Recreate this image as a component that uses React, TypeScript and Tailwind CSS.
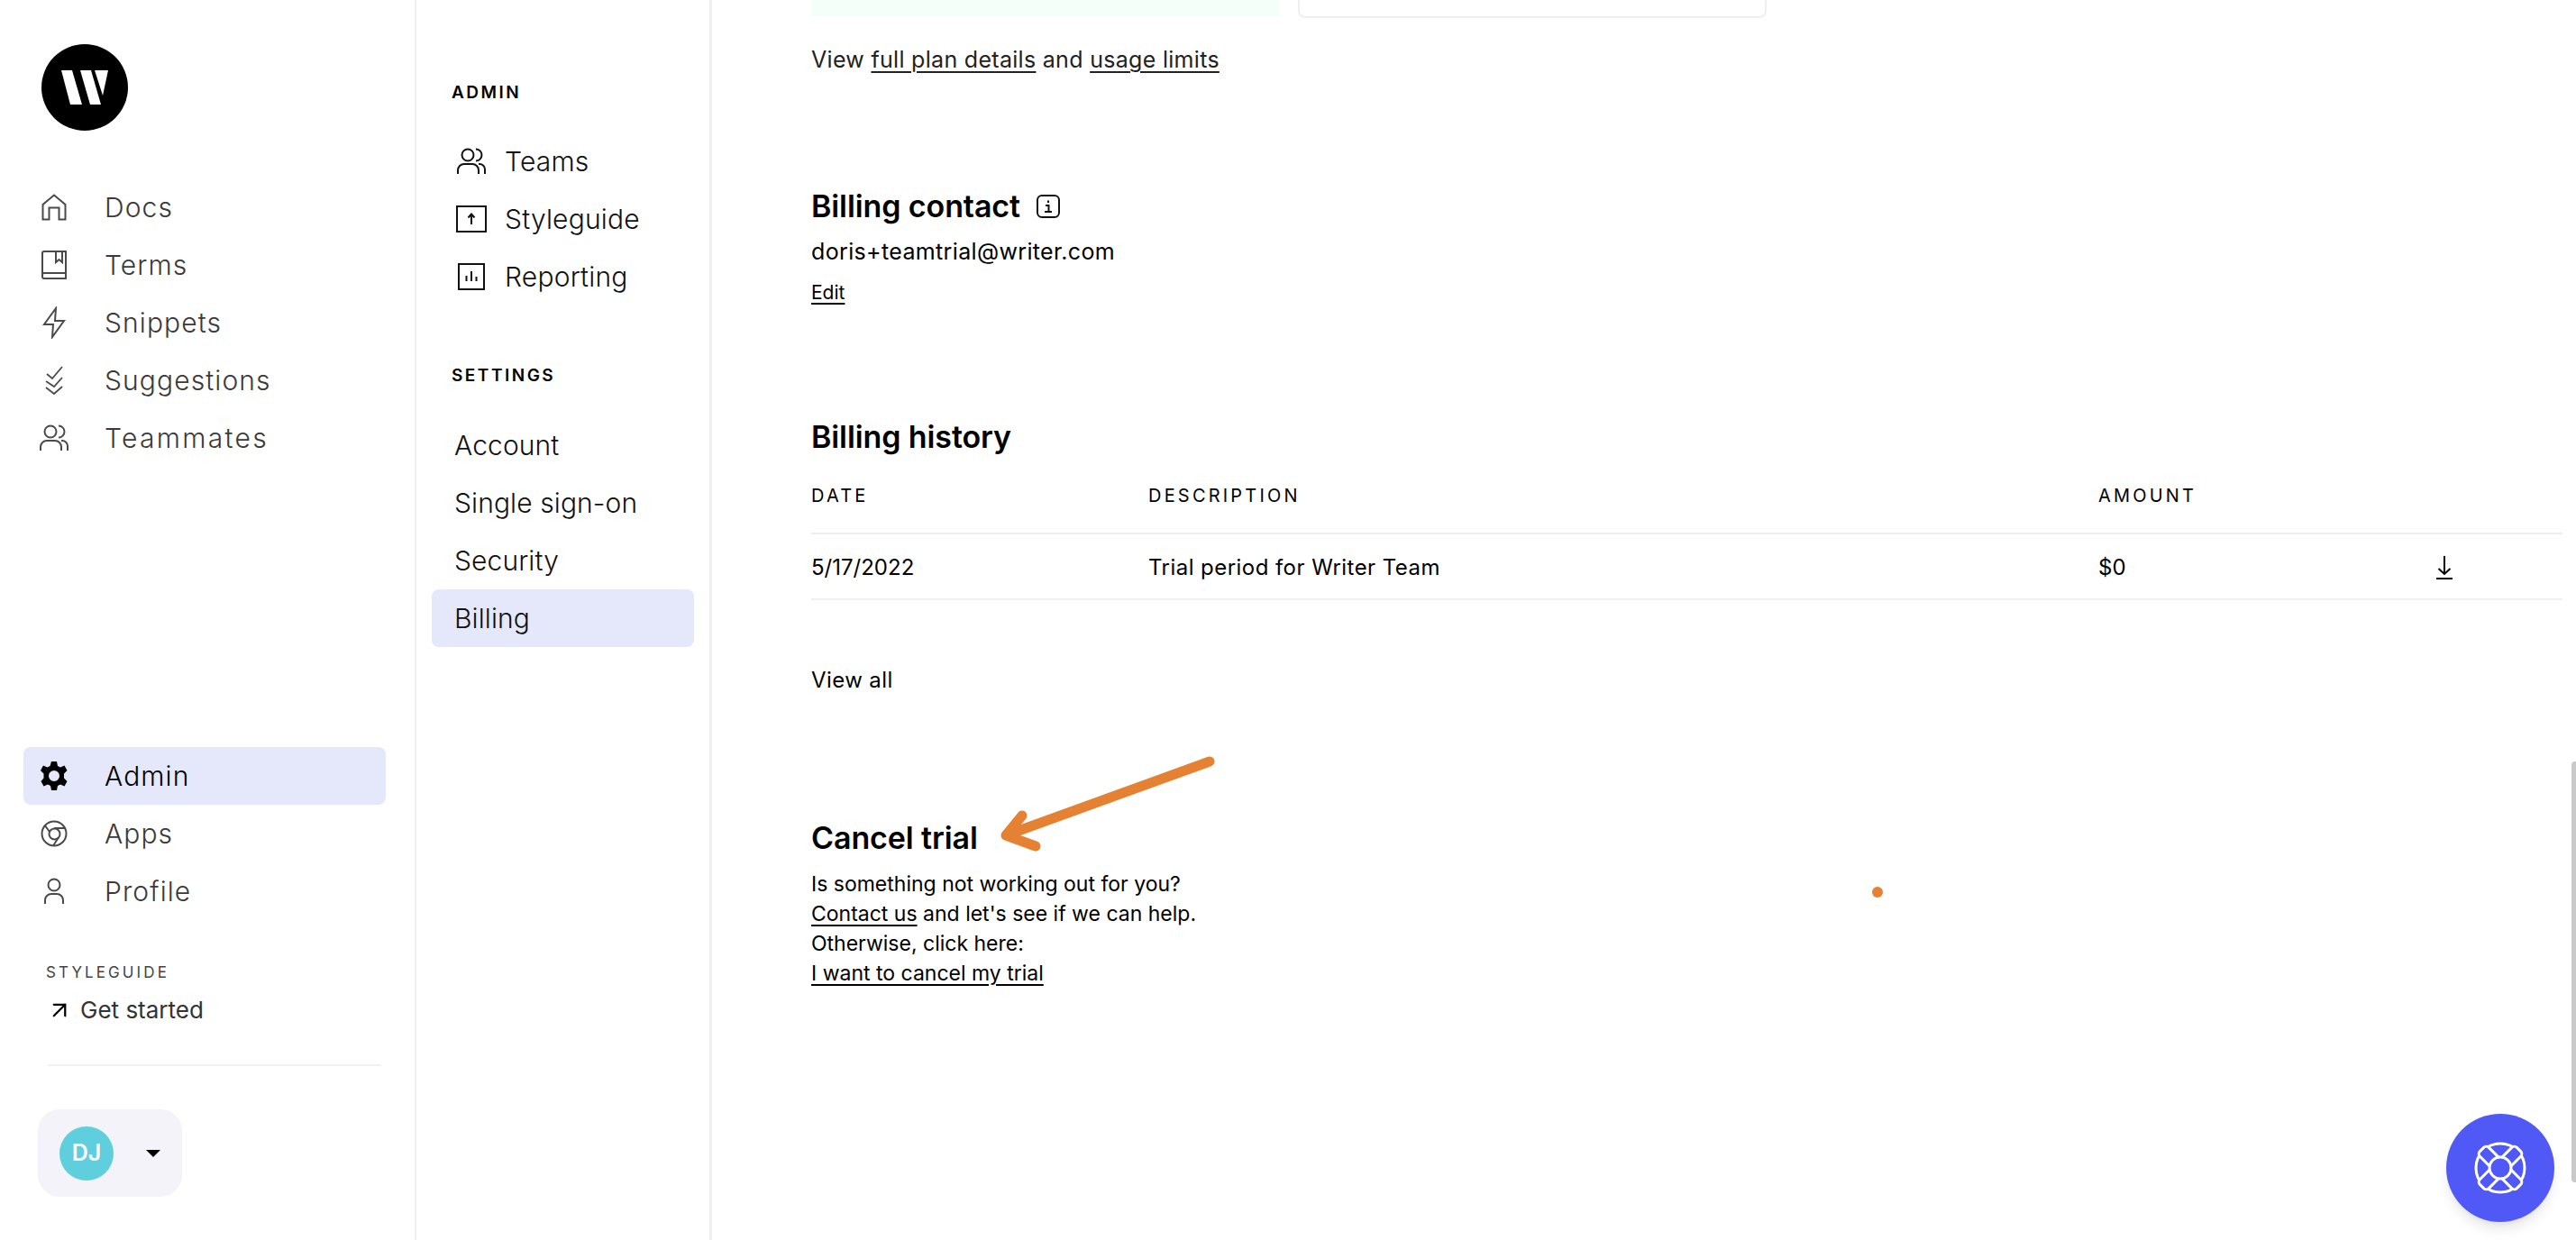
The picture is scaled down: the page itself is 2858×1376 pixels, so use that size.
import { ArrowUpRight } from "lucide-react";
import type { ReactNode } from "react";

const Home = () => (
  <svg viewBox="0 0 28 30" className="h-[30px] w-[28px]" fill="none" stroke="#4a4a4a" strokeWidth="2">
    <path d="M1.500 28.500V12L14 1.500 26.500 12v16.500h-7V15.500h-11v13z" />
  </svg>
);
const Book = () => (
  <svg viewBox="0 0 28 32" className="h-[32px] w-[28px]" fill="none" stroke="#4a4a4a" strokeWidth="2">
    <path d="M27 25V1H3a2 2 0 0 0-2 2v26a2 2 0 0 0 2 2h24v-6H3a2 2 0 0 0-2 2" />
    <path d="M16 1v12l3.500-3 3.500 3V1" />
  </svg>
);
const Bolt = () => (
  <svg viewBox="0 0 26 36" className="h-[36px] w-[26px]" fill="none" stroke="#4a4a4a" strokeWidth="2">
    <path d="M15 2 2 20h10l-1 14 13-18H14z" />
  </svg>
);
const Checks = () => (
  <svg viewBox="0 0 22 32" className="h-[32px] w-[22px]" fill="none" stroke="#4a4a4a" strokeWidth="1.800">
    <path d="M3 9l6 5L20 1M2 17l9 6 9-10M2 24l9 7 9-8" />
  </svg>
);
const People = ({ color = "#4a4a4a" }: { color?: string }) => (
  <svg viewBox="0 0 32 30" className="h-[30px] w-[32px]" fill="none" stroke={color} strokeWidth="2">
    <circle cx="12" cy="8" r="6.500" />
    <path d="M21 1.500a6.500 6.500 0 0 1 0 13M1 29v-4a7 7 0 0 1 7-7h9a7 7 0 0 1 7 7v4M24 18h1a6 6 0 0 1 6 6v5" />
  </svg>
);
const Gear = () => (
  <svg viewBox="0 0 34 34" className="h-[34px] w-[34px]" fill="#000">
    <path
      fillRule="evenodd"
      d="M14 1h6l1 5 3 1.500 4.500-2 3 5.500-3.500 3.500v5l3.500 3.500-3 5.500-4.500-2-3 1.500-1 5h-6l-1-5-3-1.500-4.500 2-3-5.500L5.500 19.500v-5L2 11l3-5.500 4.500 2 3-1.500zM17 11a6 6 0 1 0 0 12 6 6 0 0 0 0-12z"
    />
  </svg>
);
const Chrome = () => (
  <svg viewBox="0 0 30 30" className="h-[30px] w-[30px]" fill="none" stroke="#4a4a4a" strokeWidth="2">
    <circle cx="15" cy="15" r="13.500" />
    <circle cx="15.500" cy="15.500" r="6" />
    <path d="M15 9h12.500M10 13 4.500 5.500M19.500 20 14 28.500" />
  </svg>
);
const Person = () => (
  <svg viewBox="0 0 24 30" className="h-[30px] w-[24px]" fill="none" stroke="#4a4a4a" strokeWidth="2">
    <circle cx="12" cy="8" r="6.500" />
    <path d="M2 29v-4a7 7 0 0 1 7-7h6a7 7 0 0 1 7 7v4" />
  </svg>
);
const Upload = () => (
  <svg viewBox="0 0 34 30" className="h-[30px] w-[34px]" fill="none" stroke="#111" strokeWidth="2">
    <rect x="1" y="1" width="32" height="28" />
    <path d="M17 21V10M13.500 13.500 17 9.500l3.500 4" />
  </svg>
);
const Chart = () => (
  <svg viewBox="0 0 30 30" className="h-[30px] w-[30px]" fill="none" stroke="#111" strokeWidth="2">
    <rect x="1" y="1" width="28" height="28" />
    <path d="M9.500 20v-6M15 20V9M20.500 20v-5" />
  </svg>
);
const DownloadArrow = () => (
  <svg viewBox="0 0 20 26" className="ml-[-10px] h-[26px] w-[20px]" fill="none" stroke="#000" strokeWidth="2">
    <path d="M10 0v20M3.500 14 10 20l6.500-6M1 25h18" />
  </svg>
);
const Buoy = () => (
  <svg viewBox="0 0 64 64" className="h-[64px] w-[64px]" fill="#5058f5" stroke="#fff" strokeWidth="3">
    <circle cx="32" cy="32" r="27" />
    <rect x="25" y="3" width="14" height="58" rx="4" transform="rotate(45 32 32)" />
    <rect x="25" y="3" width="14" height="58" rx="4" transform="rotate(-45 32 32)" />
    <path stroke="none" d="M25 25h14v14H25z" />
    <circle cx="32" cy="32" r="12" />
  </svg>
);

const mainNav = [
  { label: "Docs", icon: <Home /> },
  { label: "Terms", icon: <Book /> },
  { label: "Snippets", icon: <Bolt /> },
  { label: "Suggestions", icon: <Checks /> },
  { label: "Teammates", icon: <People />, wide: true },
];

const bottomNav = [
  { label: "Apps", icon: <Chrome /> },
  { label: "Profile", icon: <Person /> },
];

const adminNav = [
  { label: "Teams", icon: <People color="#111" /> },
  { label: "Styleguide", icon: <Upload /> },
  { label: "Reporting", icon: <Chart /> },
];

function NavRow({ label, icon, active, wide }: { label: string; icon: ReactNode; active?: boolean; wide?: boolean }) {
  return (
    <div className={`flex h-16 items-center rounded-lg ${active ? "bg-[#e4e8fa] text-black" : "text-[#3a3a3a]"}`}>
      <div className="flex w-[68px] justify-center">{icon}</div>
      <span className={`pl-[22px] text-[30px] font-light ${wide ? "tracking-[2.300px]" : "tracking-[1.100px]"}`}>{label}</span>
    </div>
  );
}

function Link({ children }: { children: ReactNode }) {
  return <span className="underline decoration-2 underline-offset-[4px]">{children}</span>;
}

function SectionTitle({ children }: { children: ReactNode }) {
  return <h2 className="text-[34px] leading-[44px] font-semibold tracking-[-0.1px] text-black">{children}</h2>;
}

export default function App() {
  return (
    <div className="relative flex h-[1376px] w-[2858px] overflow-hidden bg-white font-['Inter',sans-serif] text-black">
      <aside className="flex w-[462px] shrink-0 flex-col border-r-[2px] border-[#f0f0f3] pl-[26px] pr-[32px]">
        <div className="mt-[49px] ml-[20px] flex h-[96px] w-[96px] items-center justify-center rounded-full bg-black">
          <svg viewBox="0 0 52 38" className="w-[52px]" fill="#fff">
            <path d="M0 0h12l11 38H10zM21 0h12l11 38H32zM37 0h15l-6 28z" />
          </svg>
        </div>
        <nav className="mt-[53px] flex flex-col">
          {mainNav.map((item) => (
            <NavRow key={item.label} {...item} />
          ))}
        </nav>
        <nav className="mt-[311px] flex flex-col">
          <NavRow label="Admin" icon={<Gear />} active />
          {bottomNav.map((item) => (
            <NavRow key={item.label} {...item} />
          ))}
        </nav>
        <div className="mt-[46px] pl-[25px] text-[17px] leading-[24px] font-normal tracking-[3.100px] text-[#444]">STYLEGUIDE</div>
        <div className="mt-[14px] flex items-center pl-[25px] text-[26px] leading-[32px] font-normal text-[#333]">
          <ArrowUpRight className="mr-[8px] h-[30px] w-[30px] text-black" strokeWidth={1.800} />
          Get started
        </div>
        <div className="mt-[44px] ml-[27px] h-[2px] w-[370px] bg-[#f0f0f3]" />
        <div className="mt-[48px] ml-[16px] flex h-[97px] w-[160px] items-center rounded-[24px] bg-[#f3f3f9] pl-[24px]">
          <div className="flex h-[60px] w-[60px] items-center justify-center rounded-full bg-[#5fcfde] text-[25px] font-semibold text-white">DJ</div>
          <div className="ml-[36px] h-0 w-0 border-x-[8px] border-t-[8px] border-x-transparent border-t-black" />
        </div>
      </aside>

      <aside className="w-[328px] shrink-0 border-r-[3px] border-[#f0f0f3] pl-[17px] pr-[17px]">
        <div className="mt-[91px] pl-[22px] text-[19px] leading-[24px] font-semibold tracking-[2.500px]">ADMIN</div>
        <nav className="mt-[32px] flex flex-col">
          {adminNav.map((item) => (
            <div key={item.label} className="flex h-16 items-center text-[#111]">
              <div className="flex w-[81px] justify-center pl-[6px]">{item.icon}</div>
              <span className="text-[30px] font-light tracking-[0.2px]">{item.label}</span>
            </div>
          ))}
        </nav>
        <div className="mt-[66px] pl-[22px] text-[19px] leading-[24px] font-semibold tracking-[2.500px]">SETTINGS</div>
        <nav className="mt-[33px] flex flex-col">
          {["Account", "Single sign-on", "Security", "Billing"].map((label) => (
            <div key={label} className={`flex h-16 items-center rounded-lg pl-[25px] text-[30px] font-light tracking-[0.1px] text-[#111] ${label === "Billing" ? "bg-[#e4e8fa]" : ""}`}>
              {label}
            </div>
          ))}
        </nav>
      </aside>

      <main className="flex-1 pl-[110px] pr-[15px] text-[24px]">
        <div className="flex h-[20px] gap-[20px]">
          <div className="h-[18px] w-[520px] bg-[#f4fffa]" />
          <div className="h-[20px] w-[520px] rounded-b-lg border-x-2 border-b-2 border-[#efefef]" />
        </div>
        <p className="mt-[28px] text-[25px] tracking-[0.3px] text-[#222]">
          View <Link>full plan details</Link> and <Link>usage limits</Link>
        </p>
        <div className="mt-[121px] flex items-center gap-[18px]">
          <SectionTitle>Billing contact</SectionTitle>
          <svg viewBox="0 0 26 26" className="h-[26px] w-[26px]" fill="none" stroke="#111" strokeWidth="2">
            <rect x="1" y="1" width="24" height="24" rx="5" />
            <path d="M10 12h3.500v7M9 19h8M13 6.500v2.500" />
          </svg>
        </div>
        <p className="mt-[11px] text-[25px] leading-[34px] tracking-[0.35px]">doris+teamtrial@writer.com</p>
        <p className="mt-[15px] text-[21px] leading-[28px]">
          <Link>Edit</Link>
        </p>
        <div className="mt-[124px]">
          <SectionTitle>Billing history</SectionTitle>
        </div>
        <div className="mt-[29px] grid h-[57px] grid-cols-[374px_1054px_384px_1fr] border-b-2 border-[#efefef] text-[20px] leading-[28px] font-normal tracking-[3.200px]">
          <div>DATE</div>
          <div>DESCRIPTION</div>
          <div>AMOUNT</div>
          <div />
        </div>
        <div className="grid h-[73px] grid-cols-[374px_1054px_384px_1fr] items-center border-b-2 border-[#efefef] pt-[3px]">
          <div>5/17/2022</div>
          <div className="tracking-[0.45px]">Trial period for Writer Team</div>
          <div>$0</div>
          <DownloadArrow />
        </div>
        <p className="mt-[72px] leading-[34px] tracking-[0.4px]">View all</p>
        <div className="mt-[136px]">
          <SectionTitle>Cancel trial</SectionTitle>
        </div>
        <div className="mt-[13px] text-[23px] leading-[33px]">
          <p>Is something not working out for you?</p>
          <p>
            <Link>Contact us</Link> and let's see if we can help.
          </p>
          <p>Otherwise, click here:</p>
          <p>
            <Link>I want to cancel my trial</Link>
          </p>
        </div>
      </main>

      {/* annotation drawn on top of the page */}
      <svg className="absolute top-[830px] left-[1100px] h-[125px] w-[260px]" viewBox="0 0 260 125" fill="none" stroke="#e58133" strokeWidth="11" strokeLinecap="round" strokeLinejoin="round">
        <path d="M242 15 16 97M34 75 16 97l33 12" />
      </svg>
      <div className="absolute top-[984px] left-[2077px] h-[12px] w-[12px] rounded-full bg-[#e58133]" />

      <div className="absolute top-[845px] right-0 h-[467px] w-[5px] rounded-l bg-[#c9c9c9]" />
      <div className="absolute top-[1236px] left-[2714px] flex h-[120px] w-[120px] items-center justify-center rounded-full bg-[#5058f5] shadow-lg">
        <Buoy />
      </div>
    </div>
  );
}
